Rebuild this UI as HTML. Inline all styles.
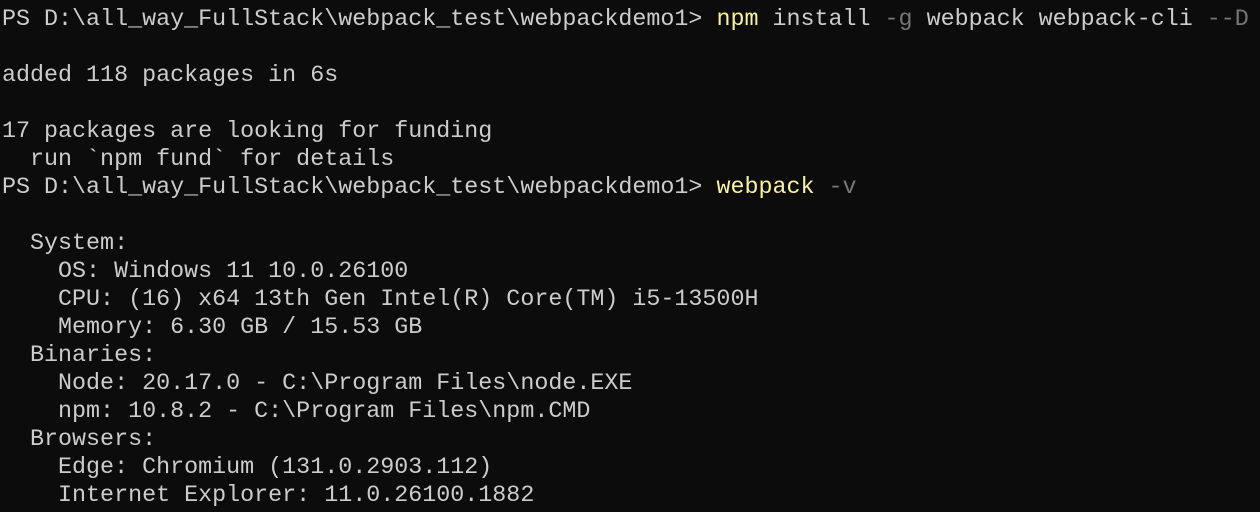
<!DOCTYPE html>
<html><head><meta charset="utf-8"><style>
html,body{margin:0;padding:0;background:#0c0c0c;width:1260px;height:512px;overflow:hidden}
pre{margin:0;padding:6px 0 0 2px;font-family:"Liberation Mono","DejaVu Sans Mono",monospace;font-size:23.35px;line-height:28px;color:#cccccc;white-space:pre}
.y{color:#f9f1a5}.g{color:#767676}
</style></head><body><pre>PS D:\all_way_FullStack\webpack_test\webpackdemo1&gt; <span class="y">npm</span> install <span class="g">-g</span> webpack webpack-cli <span class="g">--D</span>

added 118 packages in 6s

17 packages are looking for funding
  run `npm fund` for details
PS D:\all_way_FullStack\webpack_test\webpackdemo1&gt; <span class="y">webpack</span> <span class="g">-v</span>

  System:
    OS: Windows 11 10.0.26100
    CPU: (16) x64 13th Gen Intel(R) Core(TM) i5-13500H
    Memory: 6.30 GB / 15.53 GB
  Binaries:
    Node: 20.17.0 - C:\Program Files\node.EXE
    npm: 10.8.2 - C:\Program Files\npm.CMD
  Browsers:
    Edge: Chromium (131.0.2903.112)
    Internet Explorer: 11.0.26100.1882
</pre></body></html>
